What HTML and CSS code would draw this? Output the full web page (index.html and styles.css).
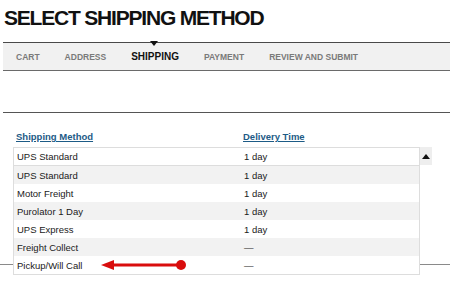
FILE: index.html
```html
<!DOCTYPE html>
<html lang="en">
<head>
    <meta charset="UTF-8">
    <meta name="viewport" content="width=device-width, initial-scale=1.0">
    <title>Select Shipping Method</title>
    <link rel="stylesheet" href="styles.css">
</head>
<body>

<h1 class="page-title">SELECT SHIPPING METHOD</h1>

<nav class="steps">
    <span class="step">Cart</span>
    <span class="step">Address</span>
    <span class="step active">Shipping</span>
    <span class="step">Payment</span>
    <span class="step">Review and Submit</span>
</nav>

<div class="rule"></div>

<section class="shipping">
    <div class="shipping-head">
        <a class="col-title" href="#">Shipping Method</a>
        <a class="col-title" href="#">Delivery Time</a>
    </div>

    <!-- open dropdown with the options -->
    <div class="options">
        <div class="option first"><span>UPS Standard</span><span>1 day</span></div>
        <div class="option"><span>UPS Standard</span><span>1 day</span></div>
        <div class="option"><span>Motor Freight</span><span>1 day</span></div>
        <div class="option"><span>Purolator 1 Day</span><span>1 day</span></div>
        <div class="option"><span>UPS Express</span><span>1 day</span></div>
        <div class="option"><span>Freight Collect</span><span>&mdash;</span></div>
        <div class="option">
            <span class="pickup">Pickup/Will Call
                <svg class="arrow" width="86" height="12" viewBox="0 0 86 12">
                    <polygon points="0,6 13,1 13,11" fill="#d90d0d"/>
                    <rect x="10" y="4.5" width="70" height="3" fill="#d90d0d"/>
                    <circle cx="80" cy="6" r="5" fill="#d90d0d"/>
                </svg>
            </span>
            <span>&mdash;</span>
        </div>
        <div class="scroll-btn"></div>
    </div>
</section>

</body>
</html>
```

FILE: styles.css
```css
body {
    margin: 0;
    padding: 0;
    font-family: "Liberation Sans", Arial, sans-serif;
    background-color: #ffffff;
    color: #222222;
}

.page-title {
    margin: 0;
    padding: 7px 0 0 4px;
    height: 35px;
    font-size: 21px;
    line-height: 22px;
    font-weight: bold;
    color: #111111;
    letter-spacing: -1.2px;
}

.steps {
    display: flex;
    align-items: center;
    gap: 25px;
    height: 27px;
    margin-left: 3px;
    padding-left: 13px;
    background-color: #f1f1f1;
    border-top: 1px solid #4a4a4a;
    border-bottom: 1px solid #6a6a6a;
}

.step {
    position: relative;
    font-size: 8.5px;
    font-weight: bold;
    text-transform: uppercase;
    color: #7a7a7a;
}

.step.active {
    font-size: 10px;
    color: #111111;
}

.step.active::before {
    content: "";
    position: absolute;
    top: -10px;
    left: 19px;
    border-left: 4px solid transparent;
    border-right: 4px solid transparent;
    border-top: 5px solid #111111;
}

.rule {
    height: 1px;
    margin: 41px 0 0 3px;
    background-color: #555555;
}

.shipping {
    position: relative;
    padding-top: 18px;
}

/* the page line running behind the open dropdown */
.shipping::after {
    content: "";
    position: absolute;
    left: 0;
    right: 0;
    top: 151px;
    height: 1px;
    background-color: #8a8a8a;
}

.shipping-head {
    display: grid;
    grid-template-columns: 227px 1fr;
    padding-left: 16px;
    height: 16px;
}

.col-title {
    font-size: 9.5px;
    font-weight: bold;
    color: #1d5b86;
    text-decoration: underline;
}

.options {
    position: relative;
    z-index: 1;
    width: 407px;
    margin-left: 13px;
    background-color: #ffffff;
    border: 1px solid #dddddd;
    box-sizing: border-box;
}

.option {
    display: grid;
    grid-template-columns: 227px 1fr;
    align-items: center;
    height: 18px;
    padding-left: 3px;
    font-size: 9.5px;
    color: #1a1a1a;
}

.option:nth-child(even) {
    background-color: #f2f2f2;
}

.option.first {
    border-bottom: 1px solid #dddddd;
    height: 17px;
}

.pickup {
    display: flex;
    align-items: center;
}

.arrow {
    margin-left: 19px;
}

.scroll-btn {
    position: absolute;
    top: -1px;
    right: -13px;
    width: 12px;
    height: 18px;
    background-color: #eeeeee;
}

.scroll-btn::before {
    content: "";
    position: absolute;
    top: 7px;
    left: 2px;
    border-left: 4px solid transparent;
    border-right: 4px solid transparent;
    border-bottom: 5px solid #111111;
}
```
